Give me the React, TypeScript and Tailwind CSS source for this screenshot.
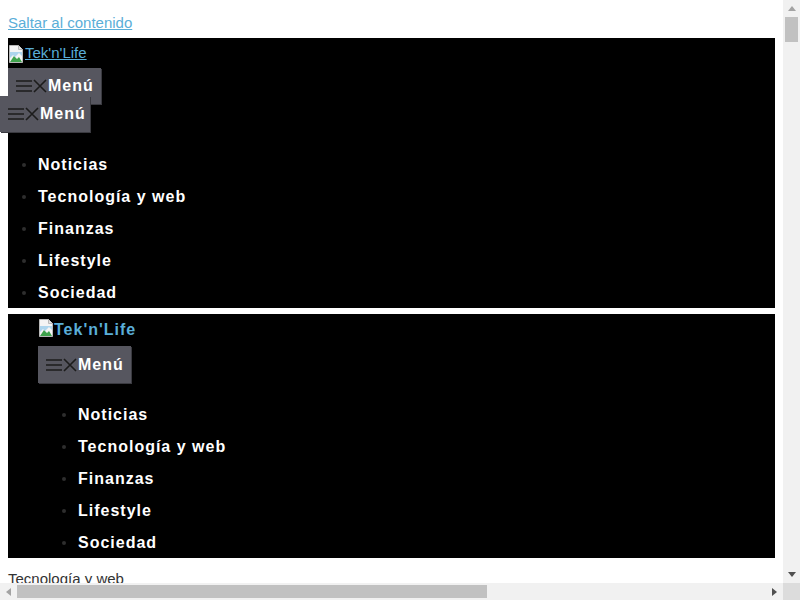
import React from "react";

const items = ["Noticias", "Tecnología y web", "Finanzas", "Lifestyle", "Sociedad"];

function BrokenImg() {
  return (
    <svg width="16" height="18" viewBox="0 0 16 18" className="shrink-0">
      <path d="M1.5 0.5h9l4 4v13h-13z" fill="#f4f4f4" stroke="#b8b8b8" />
      <path d="M10.5 0.5v4h4" fill="#e0e0e0" stroke="#b8b8b8" />
      <path d="M2 17l4-6 3 3 2-2 3 5z" fill="#3fa34d" />
      <path d="M2 13l3-3 2 2 4-4 3 3v-4H2z" fill="#8fc7ea" opacity="0.7" />
    </svg>
  );
}

function MenuIcon() {
  return (
    <svg width="31" height="14" viewBox="0 0 31 14" className="shrink-0">
      <g stroke="#1c1c1c" strokeWidth="1.6" fill="none">
        <path d="M0 2h16M0 7h16M0 12h16" />
        <path d="M18 1l12 12M30 1L18 13" />
      </g>
    </svg>
  );
}

function MenuButton({ className = "" }: { className?: string }) {
  return (
    <button
      className={
        "flex items-center pl-2 bg-[#56565f] text-white font-bold text-[16px] tracking-[1px] shadow-[1px_1px_0_#3a3a40] " +
        className
      }
    >
      <MenuIcon />
      <span className="ml-[1px]">Menú</span>
    </button>
  );
}

function NavList({ indent }: { indent: string }) {
  return (
    <ul className={indent}>
      {items.map((t) => (
        <li key={t} className="flex items-center h-[32px] relative">
          <span className="absolute left-[-16px] top-[15px] w-[4px] h-[4px] rounded-full bg-[#2e2e2e]" />
          <span className="text-white font-bold text-[16px] tracking-[1px] mt-[2px]">{t}</span>
        </li>
      ))}
    </ul>
  );
}

function VScrollbar() {
  return (
    <div className="w-[17px] shrink-0 bg-[#f1f1f1] flex flex-col">
      <div className="h-[17px] flex items-center justify-center">
        <svg width="8" height="5" viewBox="0 0 8 5"><path d="M0 5L4 0l4 5z" fill="#a3a3a3" /></svg>
      </div>
      <div className="mx-[2px] h-[25px] bg-[#c1c1c1]" />
      <div className="flex-1" />
      <div className="h-[17px] flex items-center justify-center">
        <svg width="8" height="5" viewBox="0 0 8 5"><path d="M0 0l4 5 4-5z" fill="#505050" /></svg>
      </div>
    </div>
  );
}

function HScrollbar() {
  return (
    <div className="h-[17px] shrink-0 flex">
      <div className="flex-1 bg-[#f1f1f1] flex items-center">
        <div className="w-[17px] flex items-center justify-center">
          <svg width="5" height="8" viewBox="0 0 5 8"><path d="M5 0L0 4l5 4z" fill="#a3a3a3" /></svg>
        </div>
        <div className="w-[470px] h-[13px] bg-[#c1c1c1]" />
        <div className="flex-1" />
        <div className="w-[17px] flex items-center justify-center">
          <svg width="5" height="8" viewBox="0 0 5 8"><path d="M0 0l5 4-5 4z" fill="#505050" /></svg>
        </div>
      </div>
      <div className="w-[17px] bg-[#dcdcdc]" />
    </div>
  );
}

export default function App() {
  return (
    <div className="w-[800px] h-[600px] overflow-hidden flex flex-col bg-white font-['Liberation_Sans',Arial,sans-serif] text-[15px] text-[#333]">
      <div className="flex-1 flex min-h-0">
        <div className="flex-1 overflow-hidden">
          <div className="px-2 pt-[14px]">
            <a href="#" className="block h-[24px] text-[#5aaed8] underline leading-[18px]">
              Saltar al contenido
            </a>
            <div className="w-[767px] bg-black relative">
              <div className="flex items-end h-[30px] pb-[5px]">
                <BrokenImg />
                <a href="#" className="text-[#5aaed8] underline leading-[18px] ml-[1px] mb-[1px]">
                  Tek'n'Life
                </a>
              </div>
              <MenuButton className="w-[93px] h-[36px]" />
              <MenuButton className="absolute left-[-8px] top-[58px] w-[90px] h-[36px]" />
              <div className="h-[44px]" />
              <NavList indent="pl-[30px]" />
            </div>
            <div className="h-[6px]" />
            <div className="w-[767px] bg-black pl-[30px] pt-[2px]">
              <div className="flex items-center h-[24px]">
                <BrokenImg />
                <span className="text-[#5aaed8] font-bold text-[16px] tracking-[1px] mt-[4px]">Tek'n'Life</span>
              </div>
              <div className="h-[6px]" />
              <MenuButton className="w-[93px] h-[37px]" />
              <div className="h-[15px]" />
              <NavList indent="pl-[40px]" />
            </div>
            <div className="pt-[10px] text-[#333] text-[15px]">Tecnología y web</div>
          </div>
        </div>
        <VScrollbar />
      </div>
      <HScrollbar />
    </div>
  );
}
